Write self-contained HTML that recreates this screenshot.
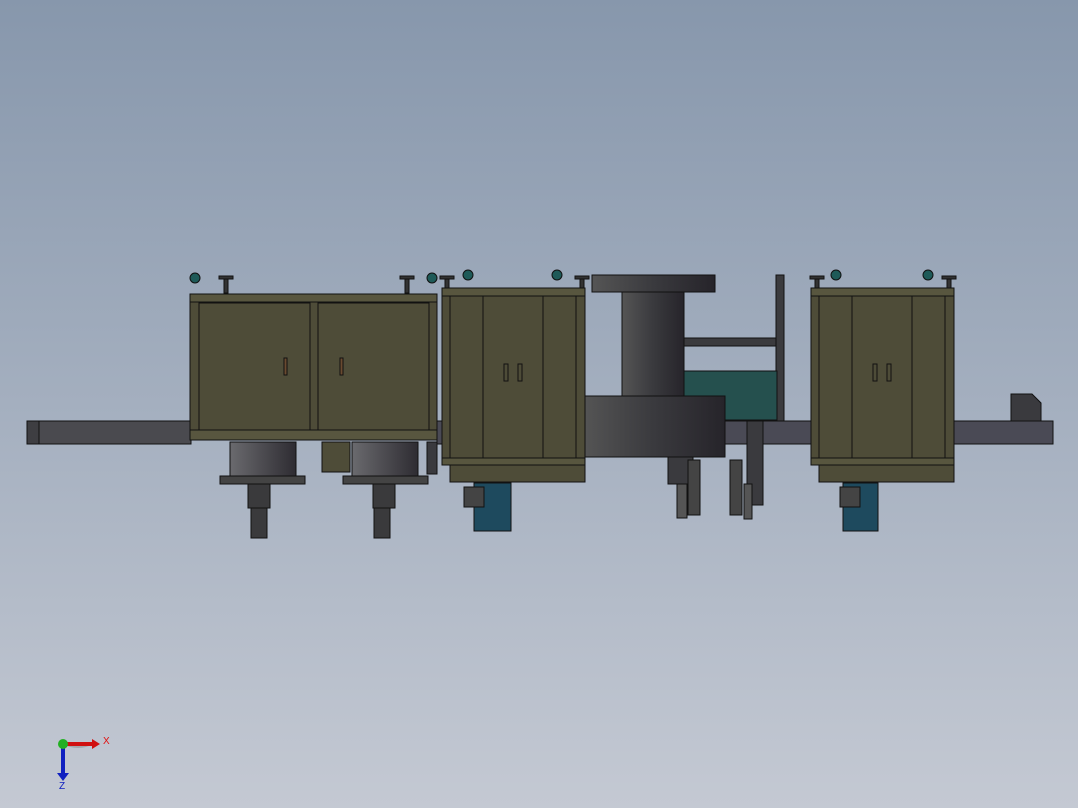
<!DOCTYPE html>
<html><head><meta charset="utf-8"><style>
html,body{margin:0;padding:0;width:1078px;height:808px;overflow:hidden}
body{background:linear-gradient(#8797ac 0%,#a4afbf 50%,#c4c9d3 100%)}
svg{position:absolute;left:0;top:0}
text{font-family:"Liberation Sans",sans-serif}
</style></head><body>
<svg width="1078" height="808" viewBox="0 0 1078 808">
<defs>
<linearGradient id="cyl" x1="0" x2="1"><stop offset="0" stop-color="#555"/><stop offset=".5" stop-color="#3a3a3e"/><stop offset="1" stop-color="#26242a"/></linearGradient>
<linearGradient id="cyl2" x1="0" x2="1"><stop offset="0" stop-color="#6a6a6e"/><stop offset="1" stop-color="#2e2c32"/></linearGradient>
</defs>
<g stroke="#111" stroke-width="1">
<!-- rails -->
<rect x="27" y="421" width="164" height="23" fill="#4a4a4f"/>
<rect x="27" y="421" width="12" height="23" fill="#3e3e42"/>
<rect x="437" y="421" width="380" height="23" fill="#4a4a55"/>
<rect x="953" y="421" width="100" height="23" fill="#4a4a55"/>
<path d="M1011 394h21l9 9v18h-30z" fill="#3a3a3e"/>
<!-- dark column group -->
<rect x="592" y="275" width="123" height="17" fill="url(#cyl)"/>
<rect x="622" y="292" width="62" height="105" fill="url(#cyl)"/>
<rect x="684" y="338" width="93" height="8" fill="#3b3b3e"/>
<rect x="776" y="275" width="8" height="146" fill="#3b3b3e"/>
<rect x="684" y="371" width="93" height="49" fill="#25504e"/>
<rect x="582" y="396" width="143" height="61" fill="url(#cyl)"/>
<rect x="668" y="457" width="25" height="27" fill="#3a3a3e"/>
<rect x="747" y="421" width="16" height="84" fill="#3a3a3e"/>
<rect x="677" y="484" width="10" height="34" fill="#555"/>
<rect x="688" y="460" width="12" height="55" fill="#444"/>
<rect x="730" y="460" width="12" height="55" fill="#444"/>
<rect x="744" y="484" width="8" height="35" fill="#555"/>
<!-- left cabinet -->
<rect x="190" y="294" width="247" height="146" fill="#4e4c38"/>
<rect x="190" y="294" width="247" height="8" fill="#58563f"/>
<rect x="199" y="303" width="111" height="127" fill="#4e4c38"/>
<rect x="318" y="303" width="111" height="127" fill="#4e4c38"/>
<rect x="190" y="430" width="247" height="10" fill="#58563f"/>
<rect x="284" y="358" width="3" height="17" fill="#6a4a30"/>
<rect x="340" y="358" width="3" height="17" fill="#6a4a30"/>
<rect x="230" y="442" width="66" height="40" fill="url(#cyl2)"/>
<rect x="352" y="442" width="66" height="40" fill="url(#cyl2)"/>
<rect x="322" y="442" width="28" height="30" fill="#4e4c38"/>
<rect x="427" y="442" width="10" height="32" fill="#3a3a3e"/>
<rect x="220" y="476" width="85" height="8" fill="#444"/>
<rect x="343" y="476" width="85" height="8" fill="#444"/>
<rect x="248" y="484" width="22" height="24" fill="#3a3a3c"/>
<rect x="251" y="508" width="16" height="30" fill="#3a3a3c"/>
<rect x="373" y="484" width="22" height="24" fill="#3a3a3c"/>
<rect x="374" y="508" width="16" height="30" fill="#3a3a3c"/>
<!-- middle cabinet -->
<rect x="442" y="288" width="143" height="177" fill="#4e4c38"/>
<rect x="442" y="288" width="143" height="8" fill="#58563f"/>
<rect x="450" y="296" width="126" height="162" fill="#4e4c38"/>
<line x1="483" y1="296" x2="483" y2="458"/><line x1="543" y1="296" x2="543" y2="458"/>
<rect x="442" y="458" width="143" height="7" fill="#58563f"/>
<rect x="450" y="465" width="135" height="17" fill="#4e4c38"/>
<rect x="504" y="364" width="4" height="17" fill="none"/><rect x="518" y="364" width="4" height="17" fill="none"/>
<rect x="474" y="483" width="37" height="48" fill="#1e4a5e"/>
<rect x="464" y="487" width="20" height="20" fill="#444"/>
<!-- right cabinet -->
<rect x="811" y="288" width="143" height="177" fill="#4e4c38"/>
<rect x="811" y="288" width="143" height="8" fill="#58563f"/>
<rect x="819" y="296" width="126" height="162" fill="#4e4c38"/>
<line x1="852" y1="296" x2="852" y2="458"/><line x1="912" y1="296" x2="912" y2="458"/>
<rect x="811" y="458" width="143" height="7" fill="#58563f"/>
<rect x="819" y="465" width="135" height="17" fill="#4e4c38"/>
<rect x="873" y="364" width="4" height="17" fill="none"/><rect x="887" y="364" width="4" height="17" fill="none"/>
<rect x="843" y="483" width="35" height="48" fill="#1e4a5e"/>
<rect x="840" y="487" width="20" height="20" fill="#444"/>
</g>
<!-- casters -->
<g fill="#1e5a58" stroke="#111">
<circle cx="195" cy="278" r="5"/><circle cx="432" cy="278" r="5"/>
<circle cx="468" cy="275" r="5"/><circle cx="557" cy="275" r="5"/>
<circle cx="836" cy="275" r="5"/><circle cx="928" cy="275" r="5"/>
</g>
<g fill="#333" stroke="#111">
<rect x="219" y="276" width="14" height="3"/><rect x="224" y="279" width="4" height="14"/>
<rect x="400" y="276" width="14" height="3"/><rect x="405" y="279" width="4" height="14"/>
<rect x="440" y="276" width="14" height="3"/><rect x="445" y="279" width="4" height="9"/>
<rect x="575" y="276" width="14" height="3"/><rect x="580" y="279" width="4" height="9"/>
<rect x="810" y="276" width="14" height="3"/><rect x="815" y="279" width="4" height="9"/>
<rect x="942" y="276" width="14" height="3"/><rect x="947" y="279" width="4" height="9"/>
</g>
<!-- axis triad -->
<path d="M63 744 A30 30 0 0 0 93 744 L63 744Z" fill="#888" opacity=".5"/>
<rect x="63" y="742" width="30" height="4" fill="#d01010"/><path d="M92 739l8 5-8 5z" fill="#d01010"/>
<rect x="61" y="744" width="4" height="30" fill="#1020c0"/><path d="M57 773h12l-6 8z" fill="#1020c0"/>
<circle cx="63" cy="744" r="5" fill="#22b022"/>
<text x="103" y="744" font-size="10" fill="#e01010">X</text>
<text x="59" y="789" font-size="10" fill="#1020c0">Z</text>
</svg>
</body></html>
